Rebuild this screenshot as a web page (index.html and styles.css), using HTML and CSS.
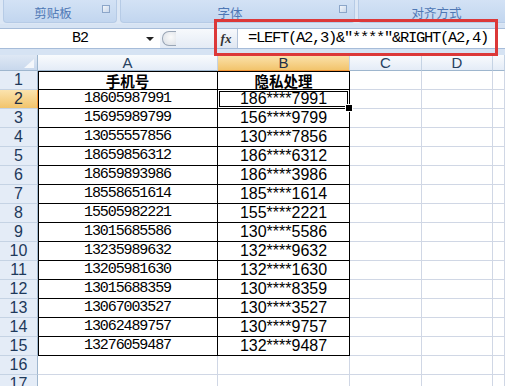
FILE: index.html
```
<!DOCTYPE html>
<html>
<head>
<meta charset="utf-8">
<link rel="stylesheet" href="styles.css">
</head>
<body>
<div class="app">
  <div class="ribbon">
    <div class="group g1"><span class="glabel">剪贴板</span><span class="launch"></span></div>
    <div class="group g2"><span class="glabel">字体</span><span class="launch"></span></div>
    <div class="group g3"><span class="glabel">对齐方式</span></div>
  </div>
  <div class="fbar">
    <div class="namebox"><span class="nb-text">B2</span><span class="nb-arrow"></span></div>
    <div class="splitter"><span class="knob"></span></div>
    <div class="fx"><i>fx</i></div>
    <div class="formula">=LEFT(A2,3)&amp;"****"&amp;RIGHT(A2,4)</div>
  </div>
  <div class="sheet">
    <div class="corner"><span class="tri"></span></div>
    <div class="ch">A</div><div class="ch sel">B</div><div class="ch">C</div><div class="ch">D</div><div class="ch last"></div>

    <div class="rh">1</div><div class="c d a t hd"><span class="hdt">手机号</span></div><div class="c d b t hd"><span class="hdt">隐私处理</span></div><div class="c"></div><div class="c"></div><div class="c"></div>
    <div class="rh sel">2</div><div class="c d a">18605987991</div><div class="c d b active">186****7991</div><div class="c"></div><div class="c"></div><div class="c"></div>
    <div class="rh">3</div><div class="c d a">15695989799</div><div class="c d b">156****9799</div><div class="c"></div><div class="c"></div><div class="c"></div>
    <div class="rh">4</div><div class="c d a">13055557856</div><div class="c d b">130****7856</div><div class="c"></div><div class="c"></div><div class="c"></div>
    <div class="rh">5</div><div class="c d a">18659856312</div><div class="c d b">186****6312</div><div class="c"></div><div class="c"></div><div class="c"></div>
    <div class="rh">6</div><div class="c d a">18659893986</div><div class="c d b">186****3986</div><div class="c"></div><div class="c"></div><div class="c"></div>
    <div class="rh">7</div><div class="c d a">18558651614</div><div class="c d b">185****1614</div><div class="c"></div><div class="c"></div><div class="c"></div>
    <div class="rh">8</div><div class="c d a">15505982221</div><div class="c d b">155****2221</div><div class="c"></div><div class="c"></div><div class="c"></div>
    <div class="rh">9</div><div class="c d a">13015685586</div><div class="c d b">130****5586</div><div class="c"></div><div class="c"></div><div class="c"></div>
    <div class="rh">10</div><div class="c d a">13235989632</div><div class="c d b">132****9632</div><div class="c"></div><div class="c"></div><div class="c"></div>
    <div class="rh">11</div><div class="c d a">13205981630</div><div class="c d b">132****1630</div><div class="c"></div><div class="c"></div><div class="c"></div>
    <div class="rh">12</div><div class="c d a">13015688359</div><div class="c d b">130****8359</div><div class="c"></div><div class="c"></div><div class="c"></div>
    <div class="rh">13</div><div class="c d a">13067003527</div><div class="c d b">130****3527</div><div class="c"></div><div class="c"></div><div class="c"></div>
    <div class="rh">14</div><div class="c d a">13062489757</div><div class="c d b">130****9757</div><div class="c"></div><div class="c"></div><div class="c"></div>
    <div class="rh">15</div><div class="c d a">13276059487</div><div class="c d b">132****9487</div><div class="c"></div><div class="c"></div><div class="c"></div>
    <div class="rh">16</div><div class="c"></div><div class="c"></div><div class="c"></div><div class="c"></div><div class="c"></div>
    <div class="rh">17</div><div class="c"></div><div class="c"></div><div class="c"></div><div class="c"></div><div class="c"></div>
  </div>
  <div class="annot"></div>
</div>
</body>
</html>
```
FILE: styles.css
```
* { box-sizing: border-box; }
html, body { margin: 0; padding: 0; }
body { width: 505px; height: 386px; overflow: hidden; background: #fff; font-family: "Liberation Sans", Arial, sans-serif; }
.app { position: relative; width: 505px; height: 386px; background: #d6e3f3; }

.ribbon { display: flex; height: 24px; gap: 3px; padding-left: 3px; background: #dce7f5; }
.group { display: flex; align-items: center; height: 23px; background: linear-gradient(#d3e2f5, #c2d6ef); border-radius: 0 0 4px 4px; border: 1px solid #b6cbe6; border-top: none; }
.g1 { width: 114px; }
.g2 { width: 235px; }
.g3 { flex: 1; margin-right: -10px; }
.glabel { flex: 1; text-align: center; font-family: "Noto Sans CJK SC", sans-serif; font-size: 12.5px; color: #4f78b5; line-height: 14px; padding-top: 4px; }
.launch { width: 8px; height: 8px; margin-right: 6px; margin-bottom: 4px; border: 1px solid #8ca6c9; background: linear-gradient(135deg, #f2f6fb, #c9d7ea); }
.g2 .launch { margin-right: 7px; }

.fbar { display: flex; height: 21px; margin-top: 4px; background: #fff; border-top: 1px solid #a6bcd9; border-bottom: 1px solid #a6bcd9; }
.namebox { position: relative; width: 160px; display: flex; align-items: center; justify-content: center; font-family: "Liberation Mono", monospace; font-size: 15px; letter-spacing: -1px; color: #000; }
.nb-arrow { position: absolute; right: 6px; top: 8px; width: 0; height: 0; border-left: 4px solid transparent; border-right: 4px solid transparent; border-top: 4px solid #222; }
.splitter { width: 54px; display: flex; align-items: center; background: linear-gradient(#f7f9fc, #e4ebf5); }
.knob { width: 14px; height: 15px; margin-left: 2px; border-radius: 7px 0 0 7px; border: 1px solid #9aa6b6; border-right: none; background: radial-gradient(circle at 60% 40%, #fafafa, #d8dde4); }
.fx { width: 24px; display: flex; align-items: center; justify-content: center; background: linear-gradient(#f7f9fc, #dfe7f2); border-left: 1px solid #b4c4da; border-right: 1px solid #b4c4da; font-family: "Liberation Serif", serif; font-size: 13px; font-weight: bold; color: #333; }
.formula { flex: 1; padding-left: 10px; font-family: "Liberation Mono", monospace; font-size: 15.5px; letter-spacing: -1.3px; line-height: 19px; color: #000; white-space: nowrap; }

.sheet { display: grid; margin-top: 6px; grid-template-columns: 38px 180px 132px 72px 71px 12px; grid-template-rows: 16px repeat(17, 19px); background: #fff; }
.corner { position: relative; background: linear-gradient(#dfe8f4, #c8d8ed); border-right: 1px solid #9eb6ce; border-bottom: 1px solid #9eb6ce; }
.tri { position: absolute; right: 3px; bottom: 2px; width: 0; height: 0; border-left: 10px solid transparent; border-bottom: 9px solid #f4f7fb; }
.ch { background: linear-gradient(#f9fbfd, #e4ecf7); border-right: 1px solid #c5d3e4; border-bottom: 1px solid #9eb6ce; text-align: center; font-size: 15px; line-height: 15px; color: #27415f; }
.ch.sel { background: linear-gradient(#fbe3ae, #f2c46c); border-bottom-color: #f29436; color: #1e2f45; }
.rh { background: #e4ecf7; border-right: 1px solid #9eb6ce; border-bottom: 1px solid #c5d3e4; text-align: center; font-size: 16px; line-height: 18px; color: #1e395b; }
.rh.sel { background: linear-gradient(#fbe3ae, #f2c46c); color: #1e2f45; border-right-color: #f29436; }
.c { border-right: 1px solid #d0d7e5; border-bottom: 1px solid #d0d7e5; text-align: center; line-height: 18px; color: #000; white-space: nowrap; }
.c.d { border-right-color: #000; border-bottom-color: #000; }
.c.a { font-family: "Liberation Mono", monospace; font-size: 15px; letter-spacing: -1.1px; box-shadow: inset 1px 0 0 #000; }
.c.b { font-family: "Liberation Sans", Arial, sans-serif; font-size: 16px; }
.c.t { box-shadow: inset 0 1px 0 #000; }
.c.a.t { box-shadow: inset 1px 1px 0 #000; }
.c.hd { display: flex; align-items: center; justify-content: center; letter-spacing: 0; }
.hdt { font-family: "Noto Sans CJK SC", sans-serif; font-size: 14.5px; font-weight: bold; line-height: 14px; padding-top: 1px; }
.c.active { position: relative; }
.c.active::after { content: ""; position: absolute; left: -1px; top: -1px; right: -1px; bottom: -1px; border: 3px double #000; }
.c.active::before { content: ""; position: absolute; right: -4px; bottom: -4px; width: 6px; height: 6px; background: #000; border: 1px solid #fff; z-index: 2; }

.annot { position: absolute; left: 214px; top: 19px; width: 284px; height: 37px; border: 3px solid #dc3838; }
```
